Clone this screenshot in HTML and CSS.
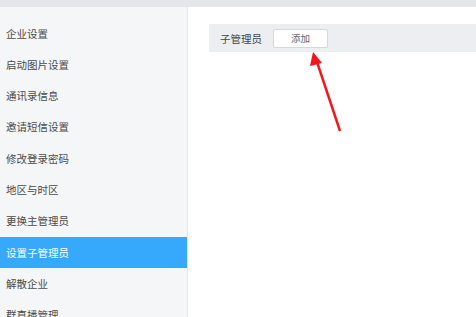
FILE: index.html
```html
<!DOCTYPE html>
<html lang="zh-CN">

<head>
  <meta charset="UTF-8">
  <meta name="viewport" content="width=device-width, initial-scale=1.0">
  <title>设置子管理员</title>
  <link rel="stylesheet" href="styles.css">
</head>

<body>
  <div class="topbar"></div>
  <div class="layout">
    <ul class="menu">
      <li class="menu-item">企业设置</li>
      <li class="menu-item">启动图片设置</li>
      <li class="menu-item">通讯录信息</li>
      <li class="menu-item">邀请短信设置</li>
      <li class="menu-item">修改登录密码</li>
      <li class="menu-item">地区与时区</li>
      <li class="menu-item">更换主管理员</li>
      <li class="menu-item active">设置子管理员</li>
      <li class="menu-item">解散企业</li>
      <li class="menu-item">群直播管理</li>
    </ul>
    <div class="main">
      <div class="panel">
        <span class="panel-label">子管理员</span>
        <button class="add-btn">添加</button>
      </div>
    </div>
  </div>

  <!-- red annotation arrow -->
  <svg class="arrow" width="476" height="317" viewBox="0 0 476 317">
    <line x1="340" y1="131" x2="317" y2="62" stroke="#f4141a" stroke-width="2.4" />
    <polygon points="313,52 310,66 322,63" fill="#f4141a" />
  </svg>
</body>

</html>
```

FILE: styles.css
```css
body {
  margin: 0;
  height: 317px;
  overflow: hidden;
  font-family: "Noto Sans CJK SC", "Noto Sans", sans-serif;
  background-color: #fff;
  position: relative;
}

.topbar {
  height: 7px;
  background-color: #e5e6e9;
}

.layout {
  display: flex;
  height: 310px;
}

.menu {
  list-style: none;
  margin: 0;
  padding: 10.5px 0 0;
  width: 187px;
  flex-shrink: 0;
  background-color: #f5f6f8;
  border-right: 1px solid #e4e6e9;
}

.menu-item {
  height: 31.3px;
  line-height: 31.3px;
  padding-left: 6px;
  font-size: 10.5px;
  color: #4a4a4a;
  white-space: nowrap;
}

.menu-item.active {
  background-color: #36a9fc;
  color: #fff;
}

.main {
  flex: 1;
  padding: 17px 0 0 21px;
}

.panel {
  display: flex;
  align-items: center;
  height: 28px;
  padding-left: 11px;
  background-color: #eceef2;
}

.panel-label {
  font-size: 10.5px;
  color: #444;
}

.add-btn {
  margin-left: 11px;
  width: 55px;
  height: 19px;
  padding: 0;
  font-family: inherit;
  font-size: 9.5px;
  color: #666;
  background-color: #fff;
  border: 1px solid #d6d8dc;
  border-radius: 2px;
}

.arrow {
  position: absolute;
  left: 0;
  top: 0;
  pointer-events: none;
}
```
